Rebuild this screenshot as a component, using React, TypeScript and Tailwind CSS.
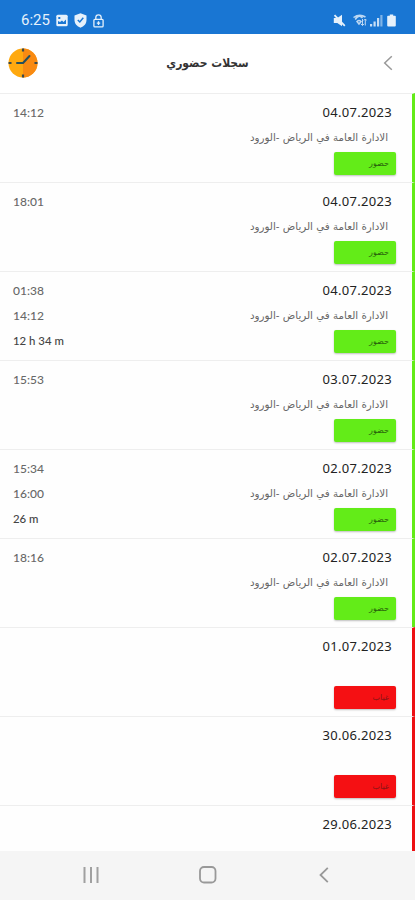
import React from 'react';
import { clsx } from 'clsx';

interface AttendanceRecord {
    date: string;
    present: boolean;
    times: string[];
    duration?: string;
    label?: string;
}

const LOCATION = 'الادارة العامة في الرياض -الورود';

const records: AttendanceRecord[] = [
    { date: '04.07.2023', present: true, label: 'حضور', times: ['14:12'] },
    { date: '04.07.2023', present: true, label: 'حضور', times: ['18:01'] },
    { date: '04.07.2023', present: true, label: 'حضور', times: ['01:38', '14:12'], duration: '12 h 34 m' },
    { date: '03.07.2023', present: true, label: 'حضور', times: ['15:53'] },
    { date: '02.07.2023', present: true, label: 'حضور', times: ['15:34', '16:00'], duration: '26 m' },
    { date: '02.07.2023', present: true, label: 'حضور', times: ['18:16'] },
    { date: '01.07.2023', present: false, label: 'غياب', times: [] },
    { date: '30.06.2023', present: false, label: 'غياب', times: [] },
    { date: '29.06.2023', present: false, times: [] },
];

function StatusBar() {
    return (
        <div className="flex h-[34px] shrink-0 items-center justify-between bg-[#1976d3] pl-[21px] pr-[19px] pt-[7px] text-[#e6f1fb]">
            <div className="flex items-center">
                <span className="w-[29px] whitespace-nowrap font-['Roboto'] text-[15px] leading-none">6:25</span>
                <svg className="ml-[6px] h-[13px] w-[12px]" viewBox="0 0 12 13">
                    <rect x="0.3" y="0.8" width="11.4" height="11.4" rx="1.5" fill="currentColor" />
                    <path d="M2 10V7l2 1 2-1.5L7.5 8 10 5.5V10Z" fill="#1976d3" />
                    <rect x="2.3" y="3" width="2" height="2" fill="#1976d3" />
                </svg>
                <svg className="ml-[6px] h-[15px] w-[13px]" viewBox="0 0 13 15">
                    <path d="M6.5.3 12.5 2.6V7c0 3.6-2.4 6.3-6 7.7C2.9 13.3.5 10.6.5 7V2.6Z" fill="currentColor" />
                    <path d="M3.8 7 5.8 9 9.3 4.8" fill="none" stroke="#1976d3" strokeWidth="1.5" />
                </svg>
                <svg className="ml-[6px] h-[14px] w-[11px]" viewBox="0 0 11 14" fill="none" stroke="currentColor" strokeWidth="1.3">
                    <rect x="0.9" y="5.3" width="9.2" height="7.6" rx="1" />
                    <path d="M2.8 5.3V3.5a2.7 2.7 0 0 1 5.4 0v1.8M5.5 7.2v3.8M3.8 9.1h3.4" />
                </svg>
            </div>
            <div className="flex items-center">
                <svg className="h-[13px] w-[13px]" viewBox="0 0 13 13">
                    <path d="M.8 4h3.5L9 .8v11.4L4.300 9H.8Z" fill="currentColor" />
                    <path d="m1.500 1.200 10.300 10.600" stroke="currentColor" strokeWidth="1.8" />
                </svg>
                <svg className="ml-[7px] h-[13px] w-[14px] opacity-80" viewBox="0 0 14 13">
                    <path d="M.5 3.5Q6.5-.5 12.5 3M2.2 5.5Q6-.2 9.5 4M4 7.5Q6 5.5 8 7.5L6 10Z" fill="none" stroke="currentColor" strokeWidth="1.5" />
                    <path d="M9.5 5v6.5M7.8 9.8l1.7 1.7 1.7-1.7M12.3 11.5V5M10.8 6.5 12.3 5l1.5 1.5" fill="none" stroke="currentColor" />
                </svg>
                <svg className="ml-[3px] h-[13px] w-[13px]" viewBox="0 0 13 13" fill="currentColor">
                    <path d="M0 10h2.2v2.5H0ZM3.5 7.5h2.2v5H3.5ZM7 4h2.2v8.5H7Z" opacity=".85" />
                    <path d="M10.3 1h2.2v11.5h-2.2Z" opacity=".5" />
                </svg>
                <svg className="ml-[4px] h-[13px] w-[9px]" viewBox="0 0 9 13" fill="currentColor">
                    <path d="M2.8.5h3.4v1.3H8a.8.8 0 0 1 .8.8v9a1 1 0 0 1-1 1H1.2a1 1 0 0 1-1-1v-9a.8.8 0 0 1 .8-.8h1.8Z" />
                </svg>
            </div>
        </div>
    );
}

function ClockLogo() {
    return (
        <svg className="h-[30px] w-[30px]" viewBox="0 0 30 30">
            <circle cx="15" cy="15" r="14.5" fill="#ffa90f" />
            <path d="M15 .5a14.5 14.5 0 0 1 0 29Z" fill="#f98a12" />
            <path d="M15 .5v3M15 26.5v3M.5 15h3M26.5 15h3" stroke="#3b4a4d" strokeWidth="2.2" />
            <path d="M9 15h6l6.5-7" fill="none" stroke="#264f5c" strokeWidth="2" strokeLinecap="round" strokeLinejoin="round" />
        </svg>
    );
}

function Header() {
    return (
        <header className="grid h-[59px] shrink-0 grid-cols-[80px_1fr_80px] items-center bg-white pb-[2px]">
            <div className="pl-[8px]">
                <ClockLogo />
            </div>
            <h1 dir="rtl" className="whitespace-nowrap text-center font-['DejaVu_Sans',sans-serif] text-[12px] font-bold font-stretch-condensed text-[#333333]">
                سجلات حضوري
            </h1>
            <svg className="ml-[48px] h-[16px] w-[10px]" viewBox="0 0 10 16" fill="none" stroke="#999999" strokeWidth="1.5">
                <path d="M8.8 1.2 1.7 8l7.1 6.8" />
            </svg>
        </header>
    );
}

function RecordRow({ record }: { record: AttendanceRecord }) {
    return (
        <li
            className={clsx(
                "flex h-[89px] justify-between border-t border-r-[3px] border-t-[#eeeeee] pl-[13px]",
                record.present ? "border-r-[#63ec18]" : "border-r-[#ee1013]"
            )}
        >
            <div className="flex flex-col pt-[6px] font-['Lato',sans-serif] text-[12px] font-medium text-[#686868]">
                {record.times.map((time, index) => (
                    <span key={index} className="h-[25px] leading-[25px]">{time}</span>
                ))}
                {record.duration && (
                    <span className="whitespace-nowrap text-[11.4px] leading-[25px] text-[#444444]">{record.duration}</span>
                )}
            </div>
            <div className="flex flex-col items-end pr-[16px] pt-[6px]">
                <span className="mr-[4px] h-[25px] font-['Noto_Sans',sans-serif] text-[13px] leading-[24px] tracking-[0.3px] text-[#222222]">{record.date}</span>
                <span dir="rtl" className="mr-[8px] h-[26px] whitespace-nowrap font-['DejaVu_Sans',sans-serif] text-[10.3px] leading-[25px] text-[#666666]">
                    {record.present && LOCATION}
                </span>
                {record.label && (
                    <span
                        dir="rtl"
                        className={clsx(
                            "mt-px h-[23px] w-[62px] rounded-[2px] pr-[7px] font-['DejaVu_Sans',sans-serif] text-[8px] leading-[23px] shadow-[0_1px_2px_rgba(0,0,0,0.25)]",
                            record.present ? "bg-[#63ec18] text-[#28600b]" : "bg-[#f51013] text-[#8c1515]"
                        )}
                    >
                        {record.label}
                    </span>
                )}
            </div>
        </li>
    );
}

function NavigationBar() {
    return (
        <nav className="flex h-[49px] shrink-0 items-center justify-between bg-[#f5f5f5] pb-[2px] pl-[83px] pr-[86px]">
            <svg className="h-[16px] w-[16px]" viewBox="0 0 16 16" stroke="#a0a0a0" strokeWidth="2">
                <path d="M1.5 0v16M8 0v16M14.5 0v16" />
            </svg>
            <svg className="mr-[3px] h-[18px] w-[18px]" viewBox="0 0 18 18" fill="none" stroke="#999999" strokeWidth="1.8">
                <rect x="1" y="1" width="15.5" height="15.5" rx="4" />
            </svg>
            <svg className="h-[16px] w-[10px]" viewBox="0 0 10 16" fill="none" stroke="#999999" strokeWidth="1.8">
                <path d="M8.8.8 1.5 8l7.3 7.2" />
            </svg>
        </nav>
    );
}

export default function App() {
    return (
        <div className="flex h-[900px] w-[415px] flex-col overflow-hidden bg-white">
            <StatusBar />
            <Header />
            <ul className="min-h-0 flex-1 overflow-hidden bg-[#fefefe]">
                {records.map((record, index) => (
                    <RecordRow key={index} record={record} />
                ))}
            </ul>
            <NavigationBar />
        </div>
    );
}
